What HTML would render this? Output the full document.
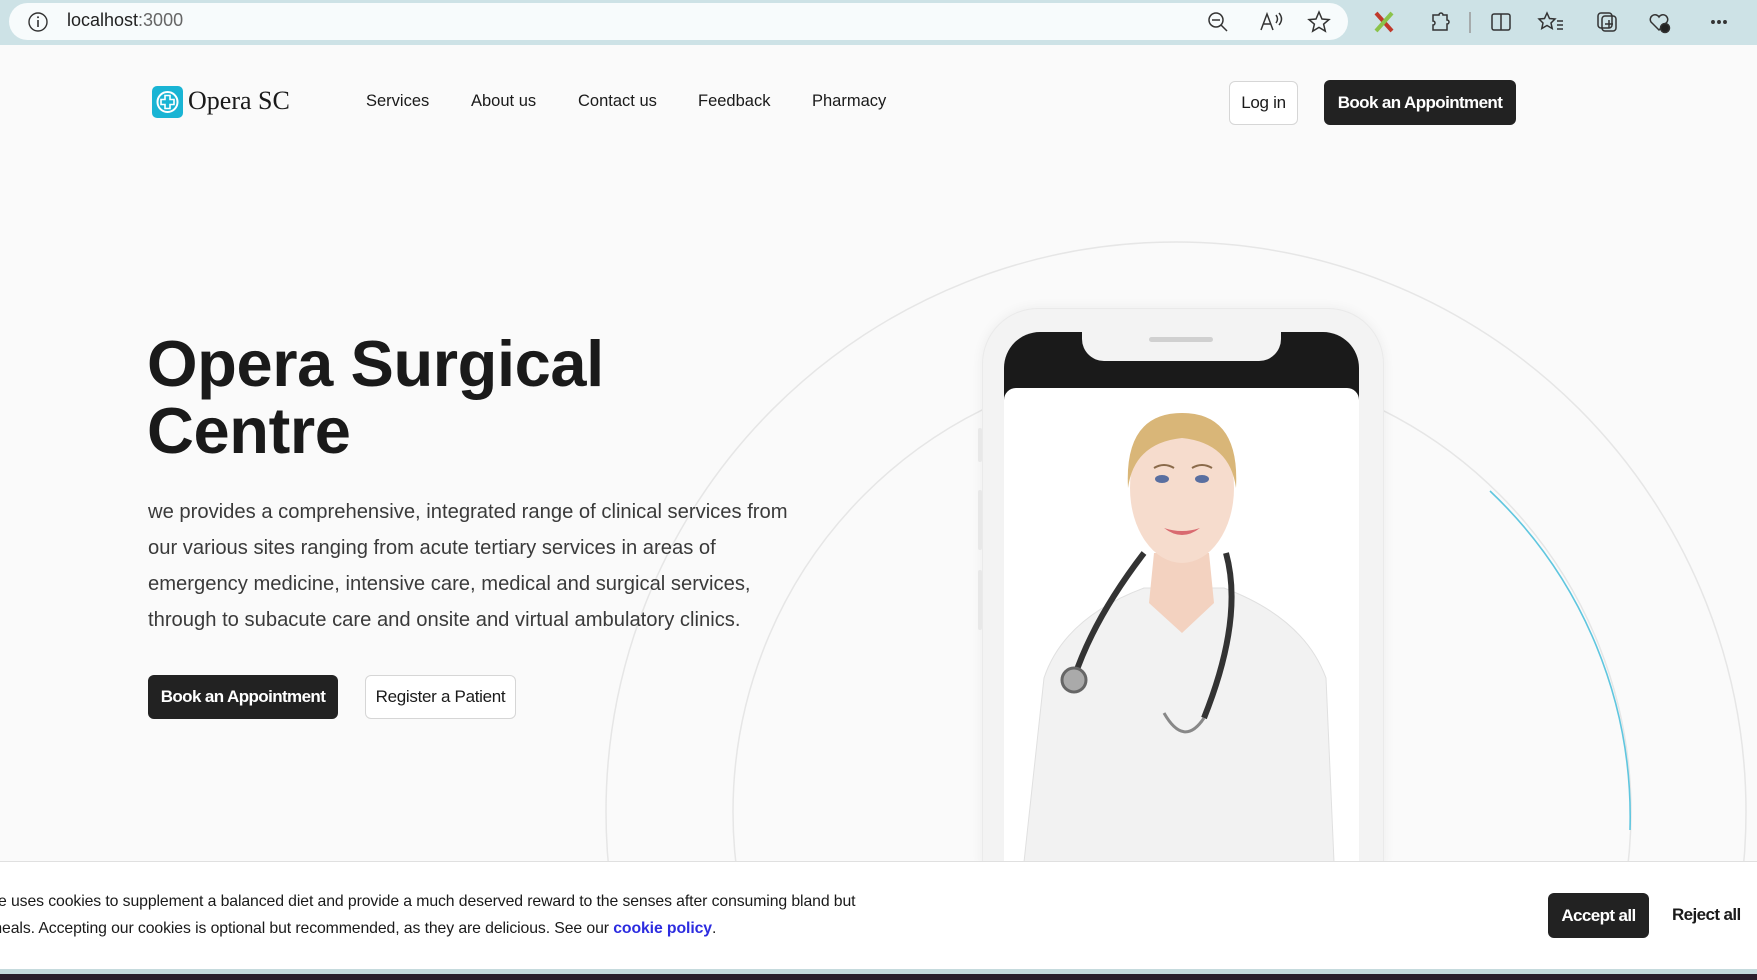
<!DOCTYPE html>
<html style="overflow:hidden"><head><meta charset="utf-8">
<style>
*{margin:0;padding:0;box-sizing:border-box}
html,body{width:1757px;height:980px;overflow:hidden}
body{background:#fafafa;font-family:"Liberation Sans",Arial,sans-serif;color:#1a1a1a;position:relative}
.abs{position:absolute}
.chrome{left:0;top:0;width:1757px;height:45px;background:#cde2e6}
.url{left:9px;top:3px;width:1339px;height:37px;background:#f7fbfc;border-radius:19px}
.nav a{position:absolute;top:92px;font-size:16.5px;color:#1a1a1a;text-decoration:none}
.btn{position:absolute;display:flex;align-items:center;justify-content:center;border-radius:6px;font-size:17px}
.dark{background:#222;color:#fff;font-weight:bold;letter-spacing:-0.6px}
.light{background:#fff;border:1px solid #d6d6d6;color:#1a1a1a;letter-spacing:-0.3px}
</style></head><body>
<div class="abs chrome"></div>
<div class="abs url"></div>
<svg class="abs" style="left:27px;top:11px" width="22" height="22" viewBox="0 0 22 22"><circle cx="11" cy="11" r="9" fill="none" stroke="#333" stroke-width="1.4"/><line x1="11" y1="9" x2="11" y2="16" stroke="#333" stroke-width="1.6"/><circle cx="11" cy="6.3" r="1" fill="#333"/></svg>
<div class="abs" style="left:67px;top:10px;font-size:18px;color:#222">localhost<span style="color:#666">:3000</span></div>
<svg class="abs" style="left:1206px;top:9px" width="340" height="26" viewBox="0 0 340 26" fill="none" stroke="#333" stroke-width="1.5">
<circle cx="10" cy="11" r="7"/><line x1="15" y1="16" x2="21" y2="22"/><line x1="6" y1="11" x2="14" y2="11"/>
<path d="M55 21 L61 5 L67 21 M57.5 15 H64.5 M70 6 q3 4 0 8 M73 4 q5 6 0 12"/>
<path d="M113 3 l3 7 7 .6 -5.4 4.6 1.7 7 -6.3 -3.8 -6.3 3.8 1.7 -7 -5.4 -4.6 7 -.6z"/>
</svg>
<svg class="abs" style="left:1374px;top:9px" width="380" height="26" viewBox="0 0 380 26" fill="none" stroke="#333" stroke-width="1.5">
<path d="M2 4 L18 22" stroke="#c0392b" stroke-width="4"/><path d="M18 4 L2 22" stroke="#8bc34a" stroke-width="4"/>
<path d="M59 6 h6 a2 2 0 0 1 4 0 h4 v5 a2 2 0 0 1 0 4 v6 h-14 v-5 a2 2 0 0 0 0 -4z"/>
<line x1="96" y1="3" x2="96" y2="24" stroke="#999"/>
<rect x="118" y="5" width="18" height="16" rx="2"/><line x1="127" y1="5" x2="127" y2="21"/>
<path d="M173 4 l2.5 5.5 5.5 .5 -4 4 1.2 5.5 -5.2 -3 -5.2 3 1.2 -5.5 -4 -4 5.5 -.5z M183 12 h6 M183 16 h6 M183 20 h6"/>
<rect x="228" y="7" width="14" height="15" rx="3"/><rect x="224" y="4" width="14" height="15" rx="3"/><path d="M235 11 v8 M231 15 h8"/>
<path d="M285 21 l-8 -8 a4.5 4.5 0 0 1 8 -5 a4.5 4.5 0 0 1 8 5z"/><circle cx="291" cy="19" r="4.5" fill="#222"/>
<circle cx="339" cy="13" r="1.2" fill="#333"/><circle cx="345" cy="13" r="1.2" fill="#333"/><circle cx="351" cy="13" r="1.2" fill="#333"/>
</svg>

<svg class="abs" style="left:152px;top:86px" width="31" height="32" viewBox="0 0 31 32"><rect width="31" height="32" rx="5" fill="#19b4d4"/><circle cx="15.5" cy="16" r="10" fill="none" stroke="#fff" stroke-width="2"/><path d="M13 9.5h5v4h4v5h-4v4h-5v-4h-4v-5h4z" fill="none" stroke="#fff" stroke-width="1.6"/></svg>
<div class="abs" style="left:188px;top:86px;font-family:'Liberation Serif',serif;font-size:26px;color:#1a1a1a">Opera SC</div>
<div class="nav"><a style="left:366px">Services</a><a style="left:471px">About us</a><a style="left:578px">Contact us</a><a style="left:698px">Feedback</a><a style="left:812px">Pharmacy</a></div>
<div class="btn light" style="left:1229px;top:81px;width:69px;height:44px">Log in</div>
<div class="btn dark" style="left:1324px;top:80px;width:192px;height:45px">Book an Appointment</div>

<svg class="abs" style="left:0;top:0" width="1757" height="980">
<circle cx="1176" cy="812" r="570" fill="none" stroke="#e6e6e6" stroke-width="1.5"/>
<circle cx="1182" cy="812" r="449" fill="none" stroke="#e6e6e6" stroke-width="1.5"/>
<path d="M1490 491 A449 449 0 0 1 1630 830" fill="none" stroke="#5fc6df" stroke-width="1.6"/>
</svg>

<div class="abs" style="left:147px;top:330px;font-size:65px;font-weight:bold;line-height:67px;letter-spacing:-0.4px;color:#1a1a1a">Opera Surgical<br>Centre</div>
<div class="abs" style="left:148px;top:494px;font-size:20.2px;line-height:36px;color:#3a3a3a;white-space:nowrap">we provides a comprehensive, integrated range of clinical services from<br>our various sites ranging from acute tertiary services in areas of<br>emergency medicine, intensive care, medical and surgical services,<br>through to subacute care and onsite and virtual ambulatory clinics.</div>
<div class="btn dark" style="left:148px;top:675px;width:190px;height:44px">Book an Appointment</div>
<div class="btn light" style="left:365px;top:675px;width:151px;height:44px">Register a Patient</div>

<div class="abs" style="left:982px;top:308px;width:402px;height:560px;border-radius:56px 56px 0 0;background:#f3f3f3;box-shadow:0 0 12px rgba(0,0,0,0.06);border:1px solid #eaeaea"></div>
<div class="abs" style="left:978px;top:428px;width:4px;height:34px;background:#e8e8e8;border-radius:2px"></div>
<div class="abs" style="left:978px;top:490px;width:4px;height:60px;background:#e8e8e8;border-radius:2px"></div>
<div class="abs" style="left:978px;top:570px;width:4px;height:60px;background:#e8e8e8;border-radius:2px"></div>
<div class="abs" style="left:1004px;top:332px;width:355px;height:530px;border-radius:36px 36px 0 0;background:#1a1a1a"></div>
<div class="abs" style="left:1082px;top:330px;width:199px;height:31px;background:#f3f3f3;border-radius:0 0 22px 22px"></div>
<div class="abs" style="left:1149px;top:337px;width:64px;height:5px;background:#d0d0d0;border-radius:3px"></div>
<div class="abs" style="left:1004px;top:388px;width:355px;height:474px;background:#fff;border-radius:12px 12px 0 0"></div>
<svg class="abs" style="left:1004px;top:388px" width="355" height="474" viewBox="0 0 355 474">
<path d="M20 474 L40 290 Q60 230 140 200 L220 200 Q300 230 322 290 L330 474z" fill="#f2f2f2" stroke="#e0e0e0"/>
<path d="M150 165 h55 l5 50 -32 30 -33 -30z" fill="#f3d2c0"/>
<ellipse cx="178" cy="100" rx="52" ry="75" fill="#f6dccd"/>
<path d="M124 100 Q120 25 178 25 Q236 25 232 100 Q226 55 178 50 Q130 55 124 100z" fill="#d9b678"/>
<path d="M150 80 q10 -6 20 0 M188 80 q10 -6 20 0" stroke="#8a6a4a" stroke-width="2" fill="none"/>
<ellipse cx="158" cy="91" rx="7" ry="4" fill="#5a6fa0"/><ellipse cx="198" cy="91" rx="7" ry="4" fill="#5a6fa0"/>
<path d="M160 140 q18 14 36 0 q-18 6 -36 0z" fill="#d96a70"/>
<path d="M140 165 Q90 230 70 290 M222 165 Q240 230 200 330" stroke="#333" stroke-width="6" fill="none"/>
<circle cx="70" cy="292" r="12" fill="#aaa" stroke="#666" stroke-width="3"/>
<path d="M200 330 Q180 360 160 325" stroke="#888" stroke-width="3" fill="none"/>
</svg>

<div class="abs" style="left:0;top:861px;width:1757px;height:108px;background:#fff;border-top:1px solid #e0e0e0"></div>
<div class="abs" style="left:-2px;top:893px;font-size:15.8px;color:#1a1a1a;white-space:nowrap;letter-spacing:-0.1px">e uses cookies to supplement a balanced diet and provide a much deserved reward to the senses after consuming bland but</div>
<div class="abs" style="left:-11px;top:920px;font-size:15.8px;color:#1a1a1a;white-space:nowrap;letter-spacing:-0.1px">meals. Accepting our cookies is optional but recommended, as they are delicious. See our <b style="color:#2c2ce0">cookie policy</b>.</div>
<div class="btn dark" style="left:1548px;top:893px;width:101px;height:45px;font-size:17px">Accept all</div>
<div class="abs" style="left:1672px;top:905px;font-size:17px;font-weight:bold;letter-spacing:-0.6px">Reject all</div>
<div class="abs" style="left:0;top:969px;width:1757px;height:5px;background:#c5dadd"></div>
<div class="abs" style="left:0;top:974px;width:1757px;height:6px;background:#2a1e2c"></div>
</body></html>
